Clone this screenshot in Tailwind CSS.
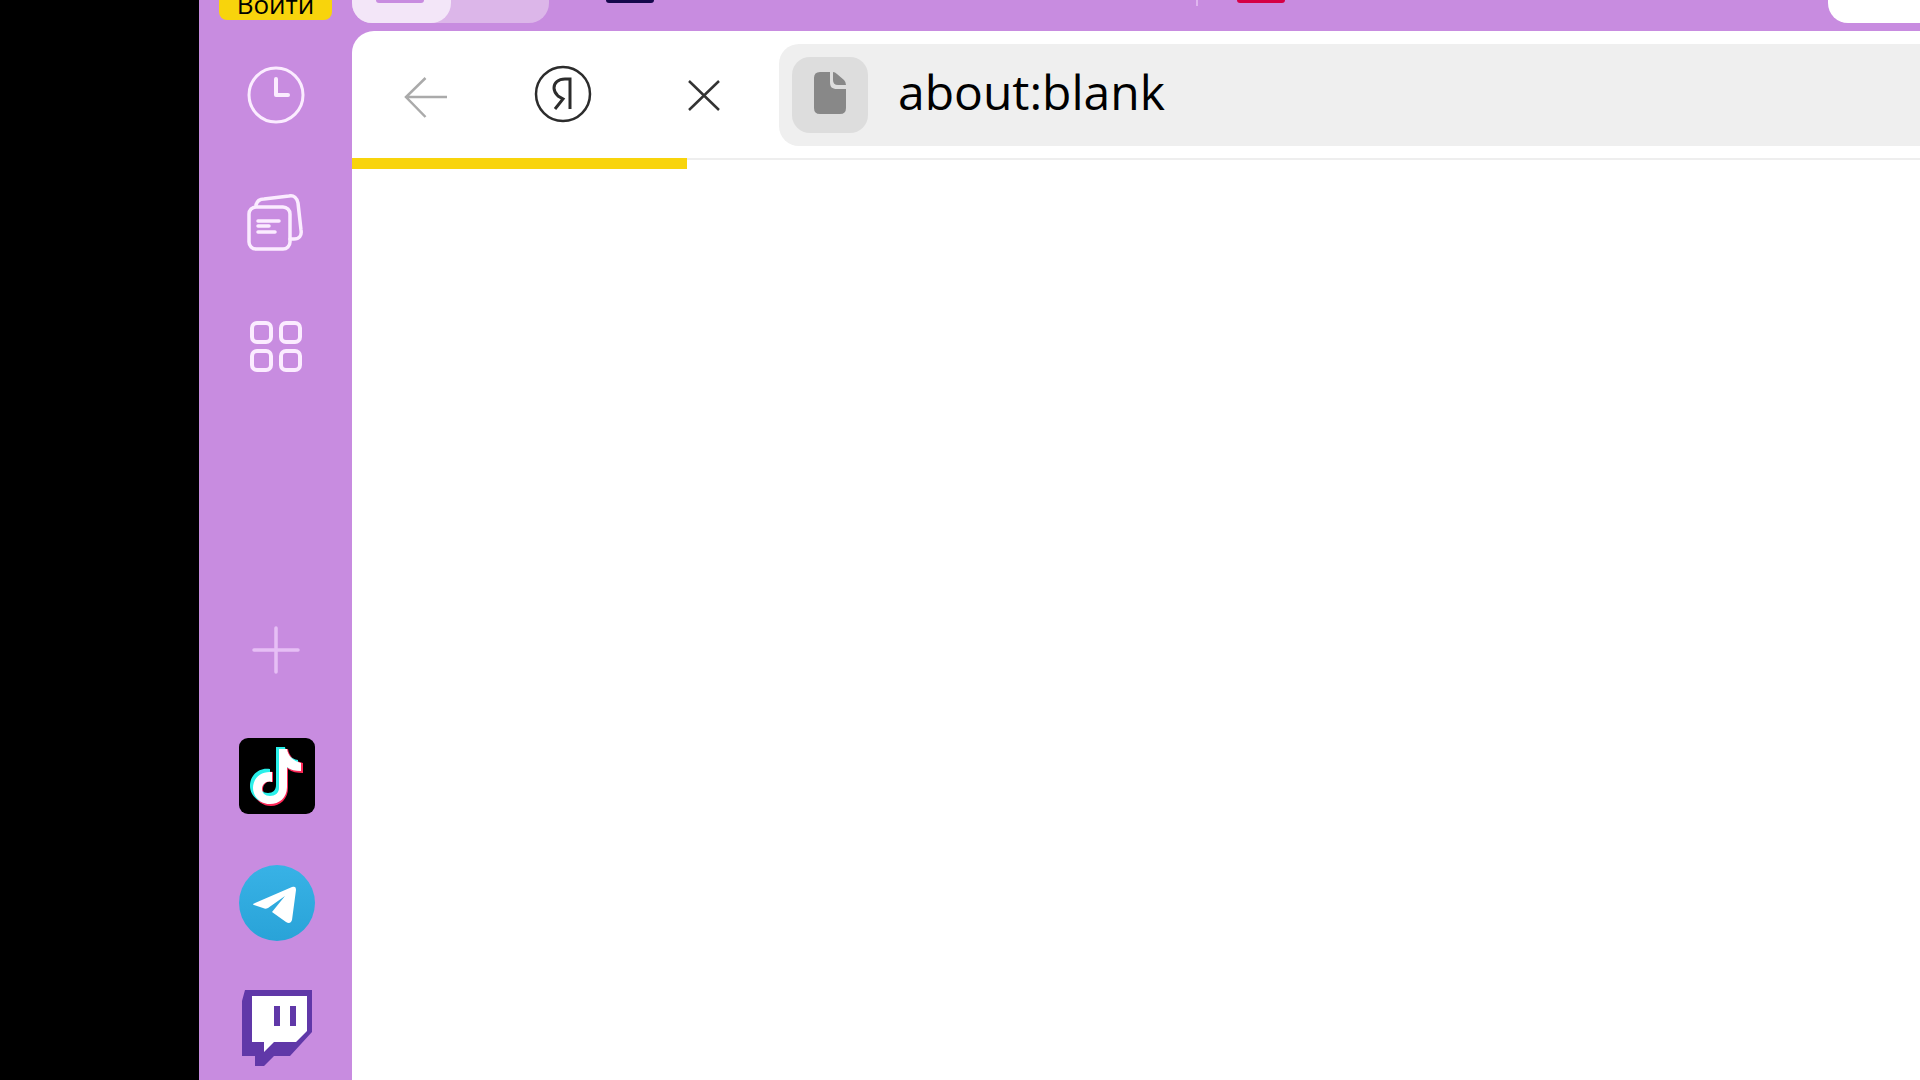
<!DOCTYPE html>
<html lang="ru">
<head>
<meta charset="utf-8">
<title>about:blank</title>
<script src="https://cdn.jsdelivr.net/npm/@tailwindcss/browser@4"></script>
</head>
<body class="flex h-screen overflow-hidden bg-black pl-[199px] font-['Open_Sans',sans-serif]">
  <aside class="flex w-[153px] shrink-0 flex-col items-center bg-[#c88ce0]">
    <button class="flex h-5 w-[113px] shrink-0 items-end justify-center overflow-hidden rounded-b-lg bg-[#f8d40c] text-[26px] leading-8 text-black">Войти</button>
    <nav class="mt-[37px] flex flex-col gap-[50px]" aria-label="Панель">
      <button class="size-[76px]" aria-label="История">
        <svg viewBox="0 0 76 76" fill="none" stroke="#fbecff" stroke-width="3" stroke-linecap="round" stroke-linejoin="round"><circle cx="38" cy="38" r="27"/><path d="M38 22v16h12" stroke-width="4"/></svg>
      </button>
      <button class="size-[76px]" aria-label="Коллекции">
        <svg viewBox="0 0 76 76" fill="none" stroke="#fbecff" stroke-width="3.5" stroke-linecap="round" stroke-linejoin="round"><rect x="11" y="24" width="41" height="42" rx="7"/><path d="M18 22c1-4 4-6 8-6l25-3c5-1 8 2 9 7l3 27c1 6-2 9-7 9h-4"/><path d="M20 38h21M20 43h11M20 49h17"/></svg>
      </button>
      <button class="size-[76px]" aria-label="Сервисы">
        <svg viewBox="0 0 76 76" fill="none" stroke="#fbecff" stroke-width="4"><rect x="14" y="14" width="19" height="19" rx="5"/><rect x="43" y="14" width="19" height="19" rx="5"/><rect x="14" y="42" width="19" height="19" rx="5"/><rect x="43" y="42" width="19" height="19" rx="5"/></svg>
      </button>
    </nav>
    <nav class="mt-[227px] flex flex-col gap-[50px]" aria-label="Приложения">
      <button class="size-[76px]" aria-label="Добавить">
        <svg viewBox="0 0 76 76" stroke="#e6bff5" stroke-width="3.5" stroke-linecap="round"><path d="M16 38h44M38 16v44"/></svg>
      </button>
      <a href="#" class="size-[76px]" aria-label="TikTok">
        <svg class="overflow-visible" viewBox="0 0 76 76"><rect x="1" width="76" height="76" rx="9"/>
          <path fill="#fe2858" transform="translate(3 2)" d="M38 9h9c1 7 6 12 15 14v10c-6 0-11-1-15-4v19c0 11-8 18-17 18-10 0-18-8-18-17 0-11 9-19 20-17v10c-5-2-10 2-10 7 0 4 3 7 8 7s8-3 8-8z"/>
          <path fill="#2af0ea" d="M38 9h9c1 7 6 12 13 13v10c-5 0-9-1-13-4v19c0 11-8 18-17 18-10 0-18-8-18-17 0-11 9-19 20-17v10c-5-2-10 2-10 7 0 4 3 7 8 7s8-3 8-8z"/>
          <path fill="#fff" transform="translate(2 1)" d="M39 10h8c1 7 6 12 14 14v8c-6 0-10-1-14-4v20c0 11-8 17-17 17-9 0-17-7-17-16 0-10 8-17 19-16v10c-5-2-10 2-10 7 0 4 3 7 8 7s9-3 9-8z"/></svg>
      </a>
      <a href="#" class="size-[76px]" aria-label="Telegram">
        <svg class="overflow-visible" viewBox="0 0 76 76"><defs><linearGradient id="tg" x2="0" y2="1"><stop stop-color="#38b2e6"/><stop offset="1" stop-color="#29a3d8"/></linearGradient></defs><circle cx="39" cy="39" r="38" fill="url(#tg)"/><path fill="#fff" d="M17 39l37-16c3-1 4 0 4 3l-4 30c-1 3-3 4-6 2L34 48l13-16-17 12c-2 1-3 1-5 0l-9-3c-2-1-1-1 1-2z"/></svg>
      </a>
      <a href="#" class="size-[76px]" aria-label="Twitch">
        <svg viewBox="0 0 76 76"><path fill="#6038a8" d="M7 0h67v42L52 66H36L26 76H17V66H4V11z"/><path fill="#fff" d="M14 6h55v35L58 52H36L26 62V52H14z"/><path fill="#6038a8" d="M36 16h6v20h-6zM52 16h6v20h-6z"/></svg>
      </a>
    </nav>
  </aside>

  <div class="flex min-w-0 flex-1 flex-col bg-[#c88ce0]">
    <div class="flex h-[31px] shrink-0 items-start" role="tablist">
      <div class="flex h-[23px] w-[197px] shrink-0 rounded-b-[20px] bg-[#dcb6e9]">
        <button class="flex h-[23px] w-[99px] justify-center rounded-b-[20px] bg-[#f3e6f8]" aria-label="Группа вкладок"><span class="mr-1 h-[3px] w-12 rounded-b-lg bg-[#c88ce0]"></span></button>
      </div>
      <button class="flex h-[23px] w-[649px] shrink-0 pl-[57px]" role="tab" aria-label="Вкладка 1"><span class="h-[3px] w-12 rounded-b-lg bg-[#15084c]"></span></button>
      <span class="-ml-0.5 h-1.5 w-0.5 shrink-0 bg-[#dfb5ef]"></span>
      <button class="flex h-[23px] min-w-0 flex-1 pl-[39px]" role="tab" aria-label="Вкладка 2"><span class="h-[3px] w-12 rounded-b-lg bg-[#d60045]"></span></button>
      <button class="h-[23px] w-[92px] shrink-0 rounded-bl-[20px] bg-white" role="tab" aria-selected="true" aria-label="about:blank"></button>
    </div>

    <main class="flex min-h-0 flex-1 flex-col rounded-tl-[22px] bg-white">
      <div class="flex shrink-0 items-center pt-[13px] pb-3 pl-9">
        <div class="flex gap-[63px]">
          <button class="size-[76px]" aria-label="Назад">
            <svg viewBox="0 0 76 76" fill="none" stroke="#aaa" stroke-width="2.5"><path d="M59 40H18M37.500 21L18 40l19.500 20"/></svg>
          </button>
          <button class="size-[76px]" aria-label="Яндекс">
            <svg viewBox="0 0 76 76" fill="none" stroke="#2c2c2c" stroke-width="2.500"><circle cx="36" cy="37" r="27"/><path d="M43 52V22h-5c-7 0-11 4-11 9 0 4 2 6 4 8l5 3-8 10" stroke-width="3"/></svg>
          </button>
          <button class="size-[76px]" aria-label="Остановить">
            <svg viewBox="0 0 76 76" stroke="#333" stroke-width="2.500"><path d="M23 24l30 29M53 24L23 53"/></svg>
          </button>
        </div>
        <form class="ml-[37px] flex h-[102px] min-w-0 flex-1 items-center rounded-l-[20px] bg-[#efefef] pl-[13px]">
          <button type="button" class="size-[76px] shrink-0 rounded-[18px] bg-[#dddddd]" aria-label="О сайте">
            <svg class="size-full" viewBox="0 0 76 76" fill="#888"><path d="M28 15h10v10c0 5 2 7 7 7h9v19q0 6-6 6H28q-6 0-6-6V21q0-6 6-6z"/><path d="M41 15q2 0 4 2l7 6q2 2 2 5h-8q-5 0-5-5z"/></svg>
          </button>
          <input type="text" aria-label="Адрес" value="about:blank" class="ml-[30px] h-[76px] min-w-0 flex-1 bg-transparent pb-2 text-[48px] text-black outline-none">
        </form>
      </div>
      <div class="h-[11px] shrink-0 border-t-2 border-[#eeeeee]">
        <div class="-mt-0.5 h-[11px] w-[335px] bg-[#f8d40c]" role="progressbar" aria-label="Загрузка"></div>
      </div>
    </main>
  </div>
</body>
</html>
